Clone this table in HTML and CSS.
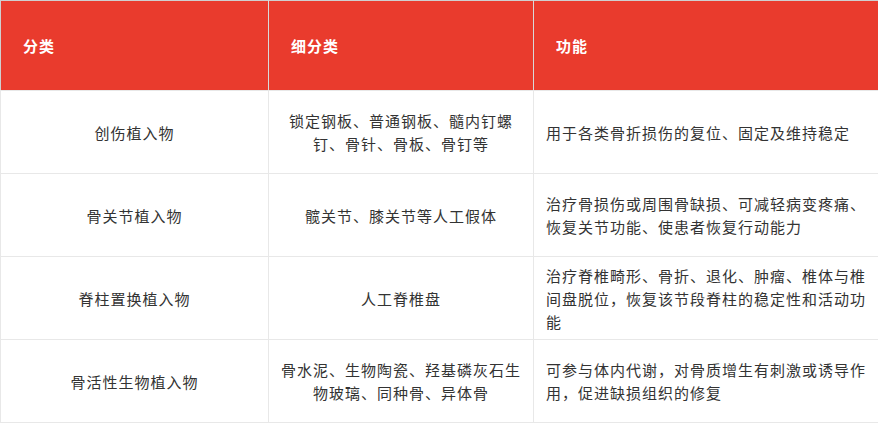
FILE: index.html
```
<!DOCTYPE html>
<html lang="zh-CN">
<head>
<meta charset="utf-8">
<link rel="stylesheet" href="styles.css">
</head>
<body>
<table class="grid">
  <colgroup>
    <col class="c1"><col class="c2"><col class="c3">
  </colgroup>
  <thead>
    <tr class="head">
      <th>分类</th>
      <th>细分类</th>
      <th>功能</th>
    </tr>
  </thead>
  <tbody>
    <tr>
      <td class="center">创伤植入物</td>
      <td class="center">锁定钢板、普通钢板、髓内钉螺钉、骨针、骨板、骨钉等</td>
      <td class="left">用于各类骨折损伤的复位、固定及维持稳定</td>
    </tr>
    <tr>
      <td class="center">骨关节植入物</td>
      <td class="center">髋关节、膝关节等人工假体</td>
      <td class="left">治疗骨损伤或周围骨缺损、可减轻病变疼痛、恢复关节功能、使患者恢复行动能力</td>
    </tr>
    <tr>
      <td class="center">脊柱置换植入物</td>
      <td class="center">人工脊椎盘</td>
      <td class="left">治疗脊椎畸形、骨折、退化、肿瘤、椎体与椎间盘脱位，恢复该节段脊柱的稳定性和活动功能</td>
    </tr>
    <tr>
      <td class="center">骨活性生物植入物</td>
      <td class="center">骨水泥、生物陶瓷、羟基磷灰石生物玻璃、同种骨、异体骨</td>
      <td class="left">可参与体内代谢，对骨质增生有刺激或诱导作用，促进缺损组织的修复</td>
    </tr>
  </tbody>
</table>
</body>
</html>
```

FILE: styles.css
```
html, body {
  margin: 0;
  padding: 0;
  background: #ffffff;
}
.grid {
  border-collapse: collapse;
  table-layout: fixed;
  width: 878px;
  font-family: "Noto Sans CJK SC", "Noto Sans", sans-serif;
  font-size: 15px;
  letter-spacing: 1px;
  color: #333333;
  border: 1px solid #cfcfcf;
}
.c1 { width: 268px; }
.c2 { width: 265px; }
.c3 { width: 345px; }
.head th {
  background: #e93b2d;
  color: #ffffff;
  font-weight: 700;
  text-align: left;
  height: 90px;
  padding: 0 22px;
  box-sizing: border-box;
  border-left: 1px solid #d9d9d9;
  border-bottom: 1px solid #e8e8e8;
  font-size: 15px;
}
.head th:first-child { border-left: none; }
tbody td {
  height: 83px;
  box-sizing: border-box;
  border: 1px solid #e8e8e8;
  line-height: 23px;
  vertical-align: middle;
  padding: 0 12px;
}
td.center { text-align: center; }
td.left { text-align: left; }
```
